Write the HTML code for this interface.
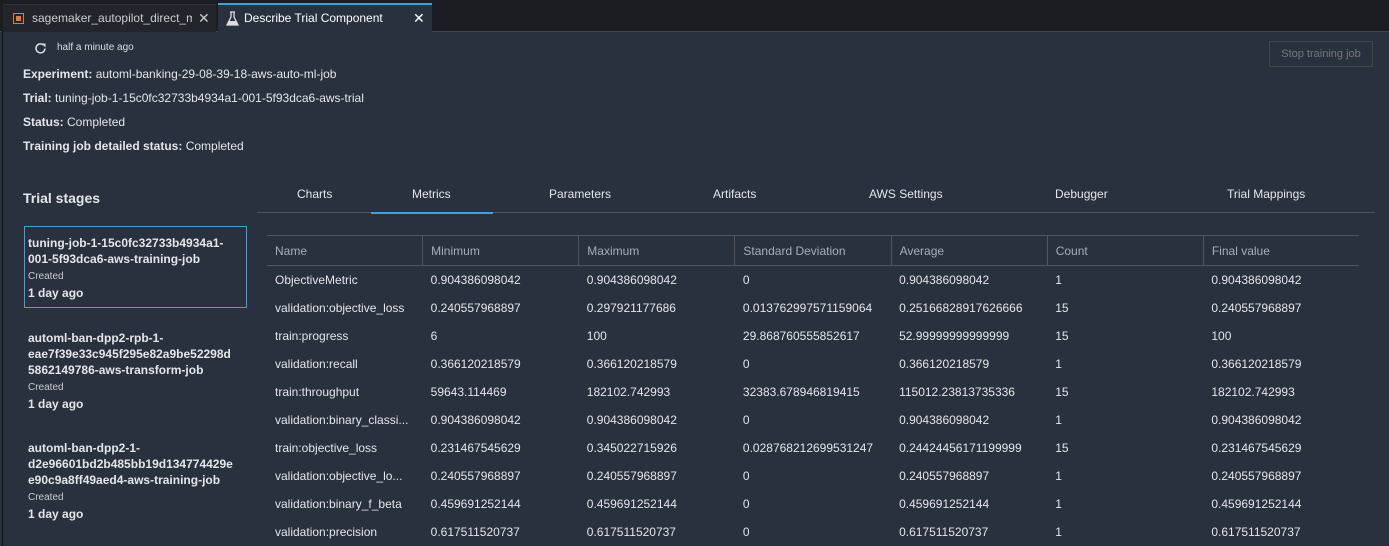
<!DOCTYPE html><html><head><style>
body{margin:0;width:1389px;height:546px;background:#29303e;font-family:"Liberation Sans",sans-serif;color:#e6e6e6;overflow:hidden;position:relative;font-size:12px}
.a{position:absolute;white-space:nowrap}
.topbar{position:absolute;left:0;top:0;width:1389px;height:31px;background:#1b1d22;border-bottom:1px solid #444}
.tab{position:absolute;top:4px;height:27px;font-size:12px;line-height:27px}
b{font-weight:bold}
.card{position:absolute;left:24px;top:226px;width:221px;height:80px;border:1px solid #3aa3de}
.st{position:absolute;left:28px;font-size:12px;line-height:16px}
.st b{display:block}
table{position:absolute;left:267px;top:235px;border-collapse:collapse;font-size:12px;table-layout:fixed;width:1092px}
td,th{width:147px;padding:0 0 0 8px;height:28px;text-align:left;white-space:nowrap;overflow:hidden}
th{font-weight:normal;color:#a9adb4;height:29px;border-top:1px solid #555;border-bottom:1px solid #555;border-left:1px solid #555}
th:first-child{border-left:none}
</style></head><body>
<div class="topbar"></div>
<div style="position:absolute;left:2px;top:31px;width:1px;height:515px;background:#111"></div>
<div class="tab" style="left:3px;width:213px;background:#22252b;color:#ccc;border-top:1px solid #333">
<span style="position:absolute;left:10px;top:8px;width:9px;height:9px;border:1px solid #e07b39;background:#e07b39;box-shadow:inset 0 0 0 2px #22252b"></span>
<span style="position:absolute;left:29px;width:160px;overflow:hidden">sagemaker_autopilot_direct_marketing</span>
<span style="position:absolute;left:195px;font-size:14px">✕</span></div>
<div class="tab" style="left:218px;width:214px;background:#29303e;color:#fff;border-top:2px solid #3aa3de;top:3px">
<svg style="position:absolute;left:8px;top:6px" width="13" height="15" viewBox="0 0 13 15"><path d="M4 1h5M5 1v5L1 14h11L8 6V1" fill="none" stroke="#ddd" stroke-width="1.3"/><path d="M3 10h7l2 4H1z" fill="#ddd"/></svg>
<span style="position:absolute;left:26px">Describe Trial Component</span>
<span style="position:absolute;left:195px;font-size:14px">✕</span></div>
<svg class="a" style="left:34px;top:42px" width="13" height="13" viewBox="0 0 13 13"><path d="M11 6.5A4.5 4.5 0 1 1 9.5 3" fill="none" stroke="#ddd" stroke-width="1.5"/><path d="M7.5 1.5h4v4z" fill="#ddd"/></svg>
<div class="a" style="left:57px;top:42px;font-size:10px;color:#ddd">half a minute ago</div>
<div class="a" style="left:1269px;top:41px;width:102px;height:24px;border:1px solid #444;color:#777;font-size:11px;line-height:24px;text-align:center">Stop training job</div>
<div class="a" style="left:23px;top:67px"><b>Experiment:</b> automl-banking-29-08-39-18-aws-auto-ml-job</div>
<div class="a" style="left:23px;top:91px"><b>Trial:</b> tuning-job-1-15c0fc32733b4934a1-001-5f93dca6-aws-trial</div>
<div class="a" style="left:23px;top:115px"><b>Status:</b> Completed</div>
<div class="a" style="left:23px;top:139px"><b>Training job detailed status:</b> Completed</div>
<div class="a" style="left:23px;top:190px;font-size:14px;font-weight:bold">Trial stages</div>
<div class="card"></div>
<div class="st" style="top:235px"><b>tuning-job-1-15c0fc32733b4934a1-<br>001-5f93dca6-aws-training-job</b><span style="font-size:10px;color:#ccc">Created</span><b>1 day ago</b></div>
<div class="st" style="top:330px"><b>automl-ban-dpp2-rpb-1-<br>eae7f39e33c945f295e82a9be52298d<br>5862149786-aws-transform-job</b><span style="font-size:10px;color:#ccc">Created</span><b>1 day ago</b></div>
<div class="st" style="top:440px"><b>automl-ban-dpp2-1-<br>d2e96601bd2b485bb19d134774429e<br>e90c9a8ff49aed4-aws-training-job</b><span style="font-size:10px;color:#ccc">Created</span><b>1 day ago</b></div>
<div class="a" style="left:257px;top:212px;width:1118px;height:1px;background:#555"></div>
<div class="a" style="left:371px;top:212px;width:122px;height:2px;background:#3aa3de"></div>
<div class="a" style="left:297px;top:187px">Charts</div>
<div class="a" style="left:412px;top:187px">Metrics</div>
<div class="a" style="left:549px;top:187px">Parameters</div>
<div class="a" style="left:713px;top:187px">Artifacts</div>
<div class="a" style="left:869px;top:187px">AWS Settings</div>
<div class="a" style="left:1055px;top:187px">Debugger</div>
<div class="a" style="left:1227px;top:187px">Trial Mappings</div>
<table>
<tr><th>Name</th><th>Minimum</th><th>Maximum</th><th>Standard Deviation</th><th>Average</th><th>Count</th><th>Final value</th></tr>
<tr><td>ObjectiveMetric</td><td>0.904386098042</td><td>0.904386098042</td><td>0</td><td>0.904386098042</td><td>1</td><td>0.904386098042</td></tr>
<tr><td>validation:objective_loss</td><td>0.240557968897</td><td>0.297921177686</td><td>0.013762997571159064</td><td>0.25166828917626666</td><td>15</td><td>0.240557968897</td></tr>
<tr><td>train:progress</td><td>6</td><td>100</td><td>29.868760555852617</td><td>52.99999999999999</td><td>15</td><td>100</td></tr>
<tr><td>validation:recall</td><td>0.366120218579</td><td>0.366120218579</td><td>0</td><td>0.366120218579</td><td>1</td><td>0.366120218579</td></tr>
<tr><td>train:throughput</td><td>59643.114469</td><td>182102.742993</td><td>32383.678946819415</td><td>115012.23813735336</td><td>15</td><td>182102.742993</td></tr>
<tr><td>validation:binary_classi...</td><td>0.904386098042</td><td>0.904386098042</td><td>0</td><td>0.904386098042</td><td>1</td><td>0.904386098042</td></tr>
<tr><td>train:objective_loss</td><td>0.231467545629</td><td>0.345022715926</td><td>0.028768212699531247</td><td>0.24424456171199999</td><td>15</td><td>0.231467545629</td></tr>
<tr><td>validation:objective_lo...</td><td>0.240557968897</td><td>0.240557968897</td><td>0</td><td>0.240557968897</td><td>1</td><td>0.240557968897</td></tr>
<tr><td>validation:binary_f_beta</td><td>0.459691252144</td><td>0.459691252144</td><td>0</td><td>0.459691252144</td><td>1</td><td>0.459691252144</td></tr>
<tr><td>validation:precision</td><td>0.617511520737</td><td>0.617511520737</td><td>0</td><td>0.617511520737</td><td>1</td><td>0.617511520737</td></tr>
</table>
</body></html>
